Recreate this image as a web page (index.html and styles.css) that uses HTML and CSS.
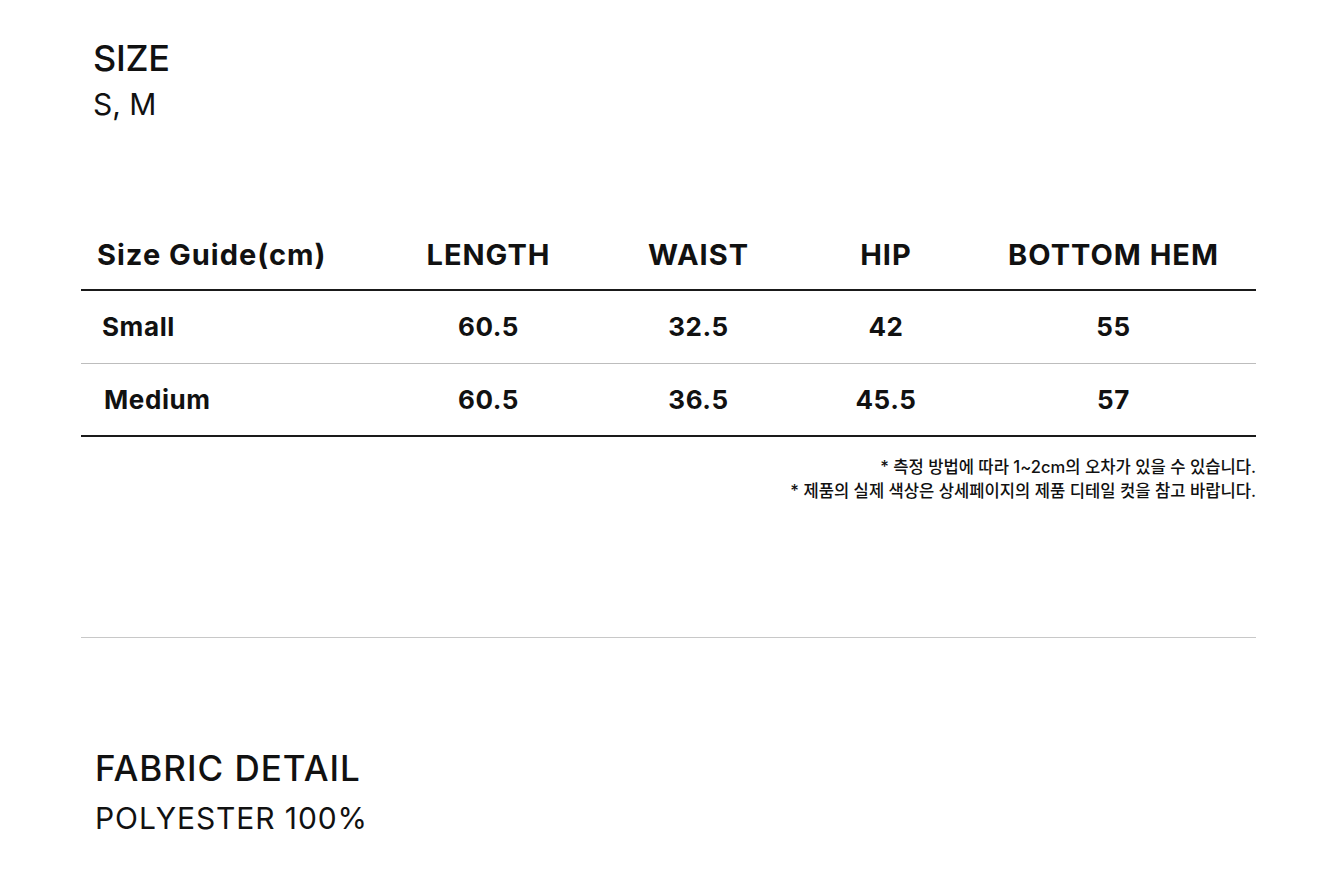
FILE: index.html
```html
<!DOCTYPE html>
<html lang="ko">
<head>
<meta charset="utf-8">
<title>Size Guide</title>
<link rel="stylesheet" href="styles.css">
</head>
<body>
<main class="page">
  <section class="info info-size">
    <h2 class="info-title">SIZE</h2>
    <p class="info-value">S, M</p>
  </section>

  <section class="guide">
    <table class="size-table">
      <thead>
        <tr>
          <th class="c-label">Size Guide(cm)</th>
          <th class="c-len">LENGTH</th>
          <th class="c-waist">WAIST</th>
          <th class="c-hip">HIP</th>
          <th class="c-hem">BOTTOM HEM</th>
        </tr>
      </thead>
      <tbody>
        <tr class="row-small">
          <td class="c-label">Small</td>
          <td class="c-len">60.5</td>
          <td class="c-waist">32.5</td>
          <td class="c-hip">42</td>
          <td class="c-hem">55</td>
        </tr>
        <tr class="row-medium">
          <td class="c-label">Medium</td>
          <td class="c-len">60.5</td>
          <td class="c-waist">36.5</td>
          <td class="c-hip">45.5</td>
          <td class="c-hem">57</td>
        </tr>
      </tbody>
    </table>
    <div class="notes">
      <p>* 측정 방법에 따라 1~2cm의 오차가 있을 수 있습니다.</p>
      <p>* 제품의 실제 색상은 상세페이지의 제품 디테일 컷을 참고 바랍니다.</p>
    </div>
  </section>

  <hr class="divider">

  <section class="info info-fabric">
    <h2 class="info-title">FABRIC DETAIL</h2>
    <p class="info-value">POLYESTER 100%</p>
  </section>
</main>
</body>
</html>
```

FILE: styles.css
```css
* { box-sizing: border-box; }

html, body {
  margin: 0;
  padding: 0;
  background: #ffffff;
}

body {
  font-family: Inter, "Noto Sans CJK KR", "Noto Sans", sans-serif;
  color: #111111;
}

.page {
  width: 1326px;
  padding: 36px 70px 0 81px;
  display: flex;
  flex-direction: column;
}

.info {
  padding-left: 12px;
}

.info-title {
  margin: 0;
  font-size: 36px;
  font-weight: 500;
  line-height: 44px;
  letter-spacing: -0.3px;
}

.info-value {
  margin: 4px 0 0 0;
  font-size: 30px;
  font-weight: 400;
  line-height: 40px;
}

.guide {
  margin-top: 96px;
}

.size-table {
  width: 1175px;
  border-collapse: collapse;
  table-layout: fixed;
}

.size-table th,
.size-table td {
  padding: 0;
  text-align: center;
  font-weight: 700;
  color: #111;
}

.size-table th {
  font-size: 29px;
  letter-spacing: 1px;
  height: 70px;
  vertical-align: middle;
  border-bottom: 2px solid #1a1a1a;
}

.size-table td {
  font-size: 26px;
  font-weight: 700;
  letter-spacing: 0.6px;
  height: 73px;
}

.size-table .c-label {
  text-align: left;
  padding-left: 16px;
  font-weight: 700;
}

.size-table td.c-label { padding-left: 21px; }
.row-medium td.c-label { padding-left: 23px; }

.row-small td { border-bottom: 1px solid #bdbdbd; }
.row-medium td { border-bottom: 2px solid #1a1a1a; }

.c-label { width: 300px; }
.c-len { width: 215px; }
.c-waist { width: 205px; }
.c-hip { width: 170px; }
.c-hem { width: 285px; }

.notes {
  margin-top: 18px;
  text-align: right;
  font-size: 16.6px;
  font-weight: 500;
  line-height: 24px;
}

.notes p { margin: 0; }

.divider {
  margin: 134px 0 0 0;
  width: 1175px;
  border: 0;
  border-top: 1px solid #c8c8c8;
  height: 0;
}

.info-fabric {
  margin-top: 108px;
  padding-left: 14px;
}

.info-fabric .info-title {
  font-size: 35px;
  letter-spacing: 1px;
}

.info-fabric .info-value {
  margin-top: 8px;
  letter-spacing: 0.9px;
}
```
